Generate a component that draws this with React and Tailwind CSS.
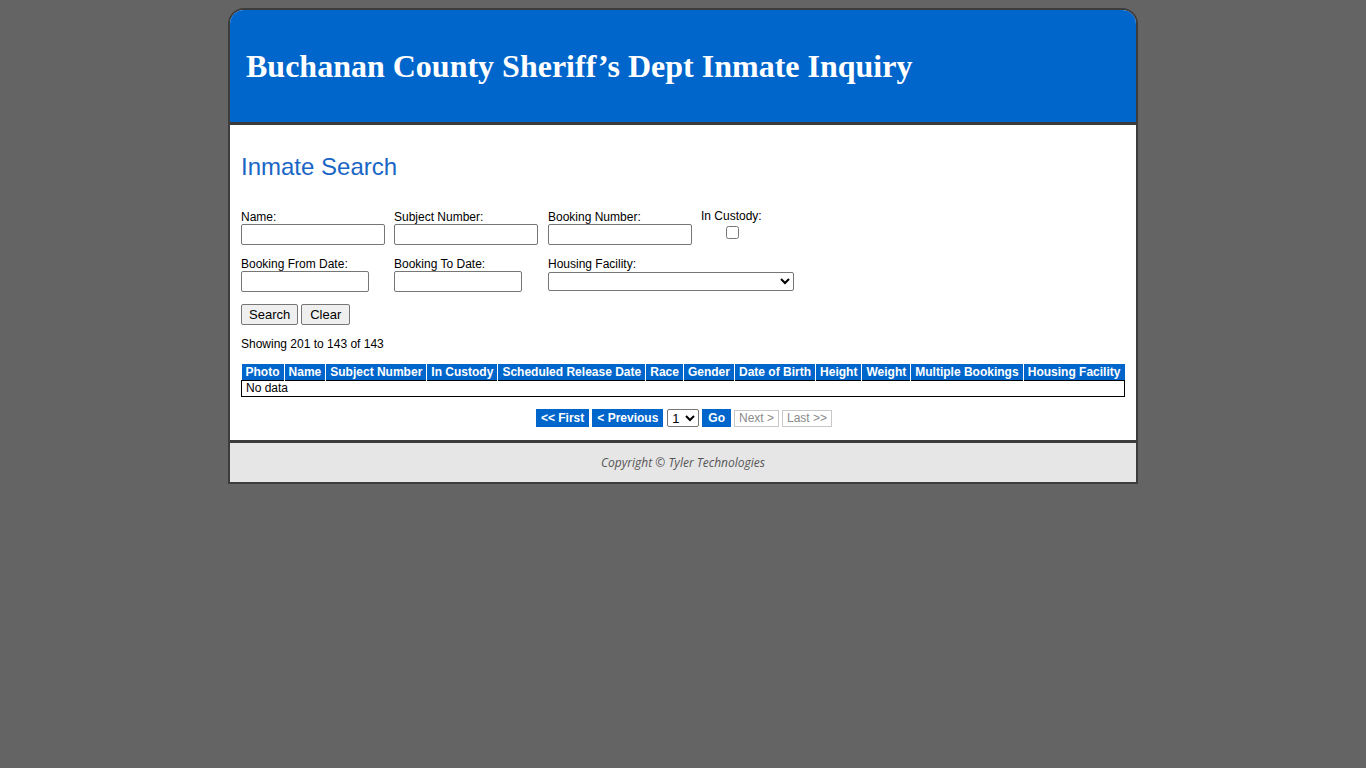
import React from "react";

const arial = { fontFamily: '"Liberation Sans", Arial, sans-serif' };

const columns = [
  "Photo",
  "Name",
  "Subject Number",
  "In Custody",
  "Scheduled Release Date",
  "Race",
  "Gender",
  "Date of Birth",
  "Height",
  "Weight",
  "Multiple Bookings",
  "Housing Facility",
];

function Field({ label, width }) {
  return (
    <div className="flex flex-col">
      <label className="text-[12px] leading-[14px] text-black">{label}</label>
      <input
        type="text"
        className={`${width} h-[21px] border border-[#767676] rounded-[2px] bg-white`}
      />
    </div>
  );
}

export default function App() {
  return (
    <div className="min-h-[768px] w-full bg-[#646464] pt-[8px]" style={arial}>
      <div className="mx-auto w-[910px] border-2 border-[#3c3c3c] rounded-t-[16px] overflow-hidden bg-white">
        {/* banner */}
        <div className="h-[115px] bg-[#0066cc] border-b-[3px] border-[#3c3c3c] flex items-center pl-[16px]">
          <h1
            className="text-white font-bold text-[32px] leading-none"
            style={{ fontFamily: '"Liberation Serif", "Times New Roman", serif' }}
          >
            Buchanan County Sheriff’s Dept Inmate Inquiry
          </h1>
        </div>

        {/* search form */}
        <div className="px-[11px] pt-[28px] pb-[13px]">
          <h2 className="text-[24px] leading-[28px] text-[#1a66c5]">Inmate Search</h2>

          <div className="mt-[29px] grid grid-cols-[153px_154px_153px_auto] gap-y-[12px]">
            <Field label="Name:" width="w-[144px]" />
            <Field label="Subject Number:" width="w-[144px]" />
            <Field label="Booking Number:" width="w-[144px]" />
            <div className="flex flex-col -mt-[1px]">
              <label className="text-[12px] leading-[14px] text-black">In Custody:</label>
              <input type="checkbox" className="ml-[25px] mt-[3px] w-[13px] h-[13px]" />
            </div>

            <Field label="Booking From Date:" width="w-[128px]" />
            <Field label="Booking To Date:" width="w-[128px]" />
            <div className="col-span-2 flex flex-col">
              <label className="text-[12px] leading-[14px] text-black mb-[1px]">Housing Facility:</label>
              <select className="w-[246px] h-[19px] border border-[#767676] rounded-[2px] bg-white text-[12px]">
                <option></option>
              </select>
            </div>
          </div>

          <div className="mt-[12px] flex gap-[3px]">
            <button className="h-[21px] px-[7px] text-[13px] border border-[#767676] rounded-[2px] bg-[#efefef] text-black">
              Search
            </button>
            <button className="h-[21px] px-[8px] text-[13px] border border-[#767676] rounded-[2px] bg-[#efefef] text-black">
              Clear
            </button>
          </div>

          <p className="mt-[12px] text-[12px] leading-[14px] text-black">Showing 201 to 143 of 143</p>

          <table className="mt-[13px] w-full border-collapse text-[12px]">
            <thead>
              <tr className="bg-[#0066cc]">
                {columns.map((c, i) => (
                  <th
                    key={c}
                    className={`text-white font-bold leading-[16px] px-[4px] whitespace-nowrap ${
                      i > 0 ? "border-l border-white" : ""
                    }`}
                  >
                    {c}
                  </th>
                ))}
              </tr>
            </thead>
            <tbody>
              <tr>
                <td
                  colSpan={columns.length}
                  className="border border-black px-[4px] leading-[15px] text-black text-left"
                >
                  No data
                </td>
              </tr>
            </tbody>
          </table>

          {/* pager */}
          <div className="mt-[12px] flex justify-center items-center gap-[3px] text-[12px]">
            <span className="bg-[#0066cc] text-white font-bold h-[18px] leading-[18px] px-[5px] ml-[2px]">&lt;&lt; First</span>
            <span className="bg-[#0066cc] text-white font-bold h-[18px] leading-[18px] px-[5px]">&lt; Previous</span>
            <select className="h-[18px] w-[32px] border border-[#767676] rounded-[2px] bg-white text-[13px] ml-[1px]">
              <option>1</option>
            </select>
            <span className="bg-[#0066cc] text-white font-bold h-[18px] leading-[18px] px-[6px]">Go</span>
            <span className="border border-[#c8c8c8] text-[#8a8a8a] h-[17px] leading-[15px] px-[4px]">Next &gt;</span>
            <span className="border border-[#c8c8c8] text-[#8a8a8a] h-[17px] leading-[15px] px-[4px]">Last &gt;&gt;</span>
          </div>
        </div>

        {/* footer */}
        <div className="h-[42px] bg-[#e6e6e6] border-t-[3px] border-[#3c3c3c] flex items-center justify-center">
          <span
            className="italic text-[12px] text-[#555555]"
            style={{ fontFamily: '"Open Sans", "DejaVu Sans", sans-serif' }}
          >
            Copyright © Tyler Technologies
          </span>
        </div>
      </div>
    </div>
  );
}
